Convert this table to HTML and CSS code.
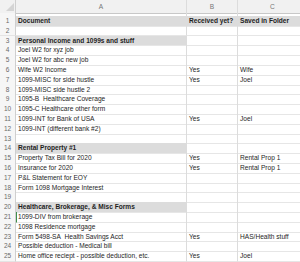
FILE: index.html
```html
<!DOCTYPE html>
<html>
<head>
<meta charset="utf-8">
<link rel="stylesheet" href="styles.css">
</head>
<body>
<div class="sheet">
  <div class="row head">
    <div class="rn corner"><svg width="16" height="13" viewBox="0 0 16 13"><polygon points="14,3 14,11 6,11" fill="#d4d4d4"/></svg></div>
    <div class="c colh">A</div>
    <div class="c colh">B</div>
    <div class="c colh">C</div>
  </div>
  <div class="gap"><div class="rn"></div><div class="c"></div><div class="c"></div><div class="c"></div></div>
  <div class="row fill-all b"><div class="rn">1</div><div class="c">Document</div><div class="c">Received yet?</div><div class="c">Saved in Folder</div></div>
  <div class="row"><div class="rn">2</div><div class="c"></div><div class="c"></div><div class="c"></div></div>
  <div class="row fill-a b"><div class="rn">3</div><div class="c">Personal Income and 1099s and stuff</div><div class="c"></div><div class="c"></div></div>
  <div class="row"><div class="rn">4</div><div class="c">Joel W2 for xyz job</div><div class="c"></div><div class="c"></div></div>
  <div class="row"><div class="rn">5</div><div class="c">Joel W2 for abc new job</div><div class="c"></div><div class="c"></div></div>
  <div class="row"><div class="rn">6</div><div class="c">Wife W2 Income</div><div class="c">Yes</div><div class="c">Wife</div></div>
  <div class="row"><div class="rn">7</div><div class="c">1099-MISC for side hustle</div><div class="c">Yes</div><div class="c">Joel</div></div>
  <div class="row"><div class="rn">8</div><div class="c">1099-MISC side hustle 2</div><div class="c"></div><div class="c"></div></div>
  <div class="row"><div class="rn">9</div><div class="c">1095-B&nbsp; Healthcare Coverage</div><div class="c"></div><div class="c"></div></div>
  <div class="row"><div class="rn">10</div><div class="c">1095-C Healthcare other form</div><div class="c"></div><div class="c"></div></div>
  <div class="row"><div class="rn">11</div><div class="c">1099-INT for Bank of USA</div><div class="c">Yes</div><div class="c">Joel</div></div>
  <div class="row"><div class="rn">12</div><div class="c">1099-INT (different bank #2)</div><div class="c"></div><div class="c"></div></div>
  <div class="row"><div class="rn">13</div><div class="c"></div><div class="c"></div><div class="c"></div></div>
  <div class="row fill-a b"><div class="rn">14</div><div class="c">Rental Property #1</div><div class="c"></div><div class="c"></div></div>
  <div class="row"><div class="rn">15</div><div class="c">Property Tax Bill for 2020</div><div class="c">Yes</div><div class="c">Rental Prop 1</div></div>
  <div class="row"><div class="rn">16</div><div class="c">Insurance for 2020</div><div class="c">Yes</div><div class="c">Rental Prop 1</div></div>
  <div class="row"><div class="rn">17</div><div class="c">P&amp;L Statement for EOY</div><div class="c"></div><div class="c"></div></div>
  <div class="row"><div class="rn">18</div><div class="c">Form 1098 Mortgage Interest</div><div class="c"></div><div class="c"></div></div>
  <div class="row"><div class="rn">19</div><div class="c"></div><div class="c"></div><div class="c"></div></div>
  <div class="row fill-a b"><div class="rn">20</div><div class="c">Healthcare, Brokerage, &amp; Misc Forms</div><div class="c"></div><div class="c"></div></div>
  <div class="row"><div class="rn">21</div><div class="c active">1099-DIV from brokerage</div><div class="c"></div><div class="c"></div></div>
  <div class="row"><div class="rn">22</div><div class="c">1098 Residence mortgage</div><div class="c"></div><div class="c"></div></div>
  <div class="row"><div class="rn">23</div><div class="c">Form 5498-SA&nbsp; Health Savings Acct</div><div class="c">Yes</div><div class="c">HAS/Health stuff</div></div>
  <div class="row"><div class="rn">24</div><div class="c">Possible deduction - Medical bill</div><div class="c"></div><div class="c"></div></div>
  <div class="row"><div class="rn">25</div><div class="c">Home office reciept - possible deduction, etc.</div><div class="c">Yes</div><div class="c">Joel</div></div>
</div>
</body>
</html>
```
FILE: styles.css
```css
html, body {
  margin: 0;
  padding: 0;
  background: #ffffff;
}
body {
  width: 300px;
  height: 262px;
  overflow: hidden;
  font-family: "Liberation Sans", Arial, sans-serif;
  color: #1e1e1e;
}
.sheet {
  display: flex;
  flex-direction: column;
}
.row, .gap {
  display: grid;
  grid-template-columns: 16px 171px 51px 70px;
  height: 9.8px;
}
.gap {
  height: 3px;
}
.row.head {
  height: 13px;
  background: #f1f1f1;
}
.rn {
  box-sizing: border-box;
  border-right: 1px solid #cfcfcf;
  border-bottom: 1px solid #e4e4e4;
  background: #f6f6f6;
  color: #6a6a6a;
  font-size: 6.5px;
  text-align: center;
  line-height: 9.5px;
}
.c {
  box-sizing: border-box;
  border-right: 1px solid #dcdcdc;
  border-bottom: 1px solid #e6e6e6;
  font-size: 6.6px;
  line-height: 9.8px;
  padding-left: 2px;
  white-space: nowrap;
  overflow: visible;
}
.head .rn, .head .c {
  background: #f1f1f1;
  border-bottom: 1px solid #c8c8c8;
}
.corner {
  padding: 0;
}
.corner svg {
  display: block;
}
.colh {
  color: #777777;
  text-align: center;
  line-height: 13px;
  padding-left: 0;
}
.gap .c, .gap .rn {
  border-bottom: none;
}
.fill-all .c, .fill-a .c:nth-child(2) {
  background: #dcdcdc;
}
.b .c {
  font-weight: bold;
}
.active {
  border-left: 1px solid #3f8f4a;
  padding-left: 1px;
}
```
